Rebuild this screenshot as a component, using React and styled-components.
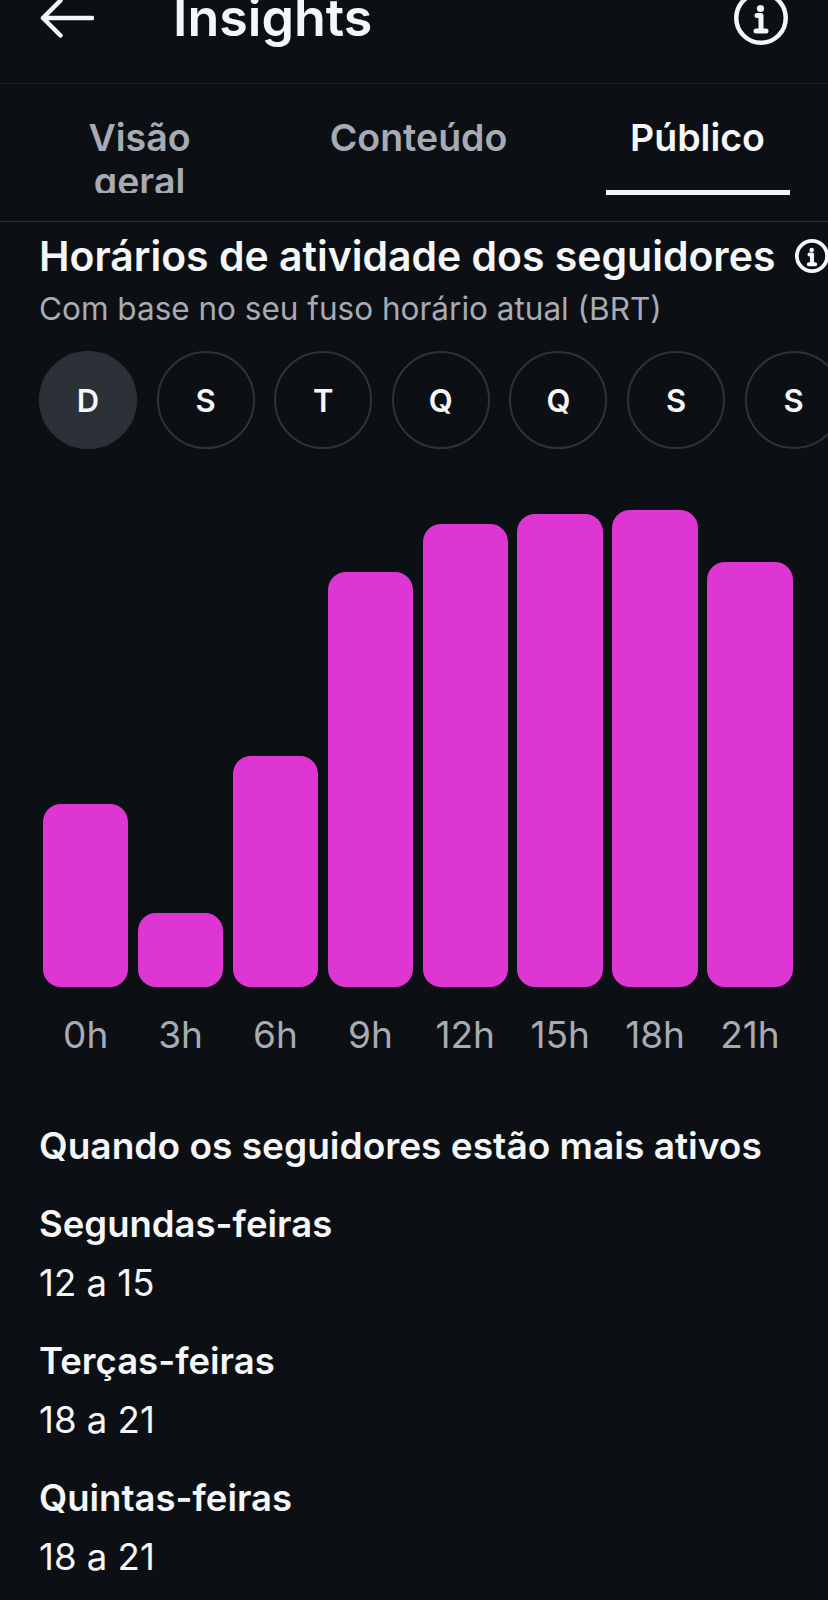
import React from 'react';
import styled, { createGlobalStyle } from 'styled-components';

const GlobalStyle = createGlobalStyle`
  html, body {
    margin: 0;
    padding: 0;
    background: #0c1014;
  }
  body {
    font-family: Inter, "Noto Sans", "Liberation Sans", sans-serif;
    color: #f5f6f7;
  }
`;

const days = ['D', 'S', 'T', 'Q', 'Q', 'S', 'S'];

const bars = [
  { label: '0h', height: 183 },
  { label: '3h', height: 74 },
  { label: '6h', height: 231 },
  { label: '9h', height: 415 },
  { label: '12h', height: 463 },
  { label: '15h', height: 473 },
  { label: '18h', height: 477 },
  { label: '21h', height: 425 }
];

const activeTimes = [
  { day: 'Segundas-feiras', hours: '12 a 15' },
  { day: 'Terças-feiras', hours: '18 a 21' },
  { day: 'Quintas-feiras', hours: '18 a 21' }
];

const InfoIcon = ({ size, weight = 4.5 }) => (
  <svg width={size} height={size} viewBox="0 1 54 54" fill="none" style={{ flex: 'none' }}>
    <circle cx="27" cy="28" r={27 - weight / 2} stroke="#f5f6f7" strokeWidth={weight} />
    <circle cx="26.5" cy="18.5" r="3.6" fill="#f5f6f7" />
    <path
      d="M23 25.5H27V40.5M22 41H32"
      stroke="#f5f6f7"
      strokeWidth={weight + 0.5}
      strokeLinecap="round"
      strokeLinejoin="round"
    />
  </svg>
);

const BackIcon = () => (
  <svg width="54" height="40" viewBox="0 0 54 40" fill="none">
    <path
      d="M52 20H3M20.5 2.5L3 20L20.5 37.5"
      stroke="#f5f6f7"
      strokeWidth="4.5"
      strokeLinecap="round"
      strokeLinejoin="round"
    />
  </svg>
);

const App = () => (
  <Page>
    <GlobalStyle />
    <Header>
      <BackButton>
        <BackIcon />
      </BackButton>
      <PageTitle>Insights</PageTitle>
      <InfoIcon size={54} />
    </Header>

    <Tabs>
      <Tab>
        <TabLabel>Visão geral</TabLabel>
      </Tab>
      <Tab>
        <TabLabel>Conteúdo</TabLabel>
      </Tab>
      <Tab $active>
        <TabLabel $active>Público</TabLabel>
      </Tab>
    </Tabs>

    <Content>
      <SectionHeading>
        <SectionTitle>Horários de atividade dos seguidores</SectionTitle>
        <InfoIcon size={34} weight={6} />
      </SectionHeading>
      <Subtitle>Com base no seu fuso horário atual (BRT)</Subtitle>

      <DayRow>
        {days.map((day, index) => (
          <DayPill key={index} $active={index === 0}>
            {day}
          </DayPill>
        ))}
      </DayRow>

      <Chart>
        {bars.map(bar => (
          <BarColumn key={bar.label}>
            <Bar style={{ height: bar.height }} />
          </BarColumn>
        ))}
      </Chart>
      <ChartLabels>
        {bars.map(bar => (
          <ChartLabel key={bar.label}>{bar.label}</ChartLabel>
        ))}
      </ChartLabels>

      <ActiveTitle>Quando os seguidores estão mais ativos</ActiveTitle>
      {activeTimes.map(item => (
        <ActiveItem key={item.day}>
          <ActiveDay>{item.day}</ActiveDay>
          <ActiveHours>{item.hours}</ActiveHours>
        </ActiveItem>
      ))}
    </Content>
  </Page>
);

export default App;

const Page = styled.div`
  width: 828px;
  height: 1600px;
  overflow: hidden;
  background: #0c1014;
`;

const Header = styled.header`
  box-sizing: border-box;
  height: 84px;
  padding: 0 40px 48px 40px;
  display: flex;
  align-items: center;
  border-bottom: 1px solid #1b1f24;
`;

const BackButton = styled.div`
  width: 133px;
  flex: none;
  display: flex;
  align-items: center;
`;

const PageTitle = styled.h1`
  flex: 1;
  margin: 0;
  font-size: 52px;
  line-height: 52px;
  font-weight: 560;
  color: #f5f6f7;
`;

const Tabs = styled.nav`
  box-sizing: border-box;
  height: 138px;
  display: grid;
  grid-template-columns: repeat(3, 279px);
  border-bottom: 1px solid #2a2f35;
`;

const Tab = styled.div`
  box-sizing: border-box;
  width: 184px;
  height: 111px;
  justify-self: center;
  padding-top: 32px;
  overflow: hidden;
  border-bottom: ${props => (props.$active ? '5px solid #f5f6f7' : '2px solid transparent')};
`;

const TabLabel = styled.div`
  font-size: 37.5px;
  line-height: 44px;
  font-weight: 560;
  text-align: center;
  color: ${props => (props.$active ? '#f5f6f7' : '#a8abb3')};
`;

const Content = styled.main`
  padding: 11px 0 0 39px;
`;

const SectionHeading = styled.div`
  display: flex;
  align-items: center;
  gap: 20px;
  white-space: nowrap;
`;

const SectionTitle = styled.h2`
  margin: 0;
  font-size: 40.95px;
  line-height: 46px;
  font-weight: 560;
  color: #f5f6f7;
`;

const Subtitle = styled.div`
  margin-top: 10px;
  font-size: 31.5px;
  line-height: 40px;
  font-weight: 400;
  color: #a8abb3;
  white-space: nowrap;
`;

const DayRow = styled.div`
  margin-top: 22px;
  display: flex;
  gap: 19.6px;
`;

const DayPill = styled.div`
  box-sizing: border-box;
  flex: none;
  width: 98px;
  height: 98px;
  border-radius: 50%;
  display: flex;
  align-items: center;
  justify-content: center;
  font-size: 31px;
  font-weight: 560;
  color: #f5f6f7;
  background: ${props => (props.$active ? '#2c3137' : 'transparent')};
  border: 2px solid ${props => (props.$active ? '#2c3137' : '#2e3338')};
`;

const Chart = styled.div`
  height: 538px;
  padding-left: 4px;
  display: flex;
  align-items: flex-end;
  gap: 9.5px;
`;

const BarColumn = styled.div`
  width: 85.4px;
  flex: none;
  display: flex;
  align-items: flex-end;
`;

const Bar = styled.div`
  width: 100%;
  border-radius: 18px;
  background: #dd36d3;
`;

const ChartLabels = styled.div`
  margin-top: 26px;
  padding-left: 4px;
  display: flex;
  gap: 9.5px;
`;

const ChartLabel = styled.div`
  width: 85.4px;
  flex: none;
  text-align: center;
  font-size: 37px;
  line-height: 44px;
  font-weight: 400;
  color: #a8abb3;
`;

const ActiveTitle = styled.h3`
  margin: 67px 0 0;
  font-size: 37.1px;
  line-height: 44px;
  font-weight: 560;
  color: #f5f6f7;
  white-space: nowrap;
`;

const ActiveItem = styled.div`
  margin-top: 34px;
`;

const ActiveDay = styled.div`
  font-size: 36.5px;
  line-height: 44px;
  font-weight: 560;
  color: #f5f6f7;
`;

const ActiveHours = styled.div`
  margin-top: 15px;
  font-size: 36.6px;
  line-height: 44px;
  font-weight: 400;
  color: #f5f6f7;
`;
